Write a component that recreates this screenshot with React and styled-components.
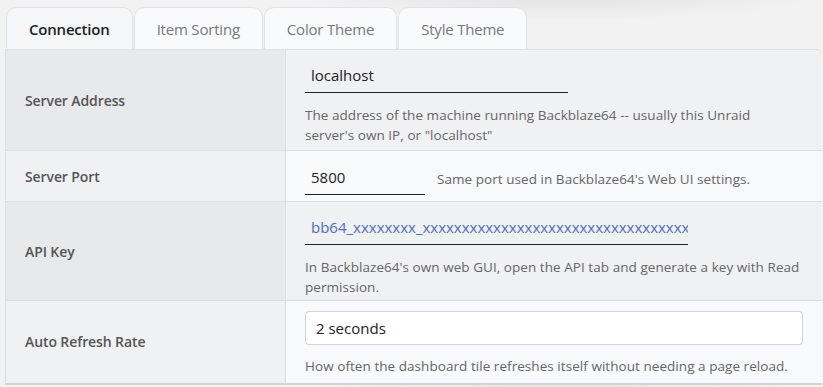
import React from 'react'
import styled, { createGlobalStyle } from 'styled-components'

const GlobalStyle = createGlobalStyle`
    html, body {
        margin: 0;
        padding: 0;
    }
    body {
        background:
            radial-gradient(ellipse 260px 26px at 560px -6px, rgba(0, 0, 0, 0.07), rgba(0, 0, 0, 0) 100%),
            #f2f2f2;
        font-family: "Open Sans", "Noto Sans", sans-serif;
        overflow: hidden;
    }
`

const tabs = ['Connection', 'Item Sorting', 'Color Theme', 'Style Theme']

const rows = [
    {
        label: 'Server Address',
        kind: 'line',
        value: 'localhost',
        width: 263,
        pad: '8px 19px 5px',
        help: 'The address of the machine running Backblaze64 -- usually this Unraid server\'s own IP, or "localhost"',
    },
    {
        label: 'Server Port',
        kind: 'line',
        value: '5800',
        width: 120,
        inline: true,
        pad: '9px 19px 6px',
        help: 'Same port used in Backblaze64\'s Web UI settings.',
    },
    {
        label: 'API Key',
        kind: 'line',
        value: 'bb64_xxxxxxxx_xxxxxxxxxxxxxxxxxxxxxxxxxxxxxxxxxxxxxxxx',
        width: 383,
        accent: true,
        pad: '8px 19px 3px',
        help: 'In Backblaze64\'s own web GUI, open the API tab and generate a key with Read permission.',
    },
    {
        label: 'Auto Refresh Rate',
        kind: 'select',
        value: '2 seconds',
        pad: '10px 19px 6px',
        help: 'How often the dashboard tile refreshes itself without needing a page reload.',
    },
]

const App = () => {
    return (
        <Page>
            <GlobalStyle />
            <TabBar>
                {tabs.map((t, i) => (
                    <Tab key={t} $active={i === 0}>{t}</Tab>
                ))}
            </TabBar>
            <SettingsTable>
                {rows.map((r, i) => (
                    <Row key={r.label}>
                        <LabelCell $alt={i % 2 === 1}>{r.label}</LabelCell>
                        <ValueCell
                            $alt={i % 2 === 1}
                            $inline={r.inline}
                            $select={r.kind === 'select'}
                            $pad={r.pad}
                        >
                            {r.kind === 'select' ? (
                                <SelectBox>{r.value}</SelectBox>
                            ) : (
                                <LineInput $width={r.width} $accent={r.accent}>
                                    <span>{r.value}</span>
                                </LineInput>
                            )}
                            <Help $inline={r.inline}>{r.help}</Help>
                        </ValueCell>
                    </Row>
                ))}
            </SettingsTable>
        </Page>
    )
}

const Page = styled.div`
    padding: 7px 1px 0 5px;
`

const TabBar = styled.div`
    display: flex;
    gap: 1px;
    padding-left: 1px;
`

const Tab = styled.div`
    height: 42px;
    display: flex;
    align-items: center;
    padding: 0 22px;
    box-sizing: border-box;
    border: 1px solid #dfe2e6;
    border-bottom: none;
    border-radius: 10px 10px 0 0;
    background: ${(p) => (p.$active ? '#f5f6f8' : '#f9fafc')};
    color: ${(p) => (p.$active ? '#222' : '#787878')};
    font-size: 15px;
    font-weight: ${(p) => (p.$active ? 600 : 500)};
    letter-spacing: -0.2px;
`

const SettingsTable = styled.div`
    border-left: 1px solid #dcdde0;
    border-top: 1px solid #dcdfe3;
    border-bottom: 2px solid #d3d4d7;
    border-top-right-radius: 6px;
    overflow: hidden;
`

const Row = styled.div`
    display: grid;
    grid-template-columns: 280px 1fr;
    & + & {
        border-top: 1px solid #dcdde0;
    }
`

const LabelCell = styled.div`
    display: flex;
    align-items: center;
    padding-left: 19px;
    background: ${(p) => (p.$alt ? '#f0f1f3' : '#e8e9eb')};
    border-right: 1px solid #dcdde0;
    color: #555;
    font-size: 14px;
    font-weight: 600;
    letter-spacing: -0.1px;
`

const ValueCell = styled.div`
    display: flex;
    flex-direction: ${(p) => (p.$inline ? 'row' : 'column')};
    align-items: ${(p) => (p.$inline ? 'center' : 'flex-start')};
    gap: ${(p) => (p.$inline || p.$select ? '12px' : '13px')};
    padding: ${(p) => p.$pad};
    background: ${(p) => (p.$alt ? '#f8f9fb' : '#f0f1f3')};
`

const LineInput = styled.div`
    width: ${(p) => p.$width}px;
    height: 35px;
    box-sizing: border-box;
    border-bottom: 1px solid #222;
    padding: 0 6px;
    display: flex;
    align-items: center;
    overflow: hidden;
    white-space: nowrap;
    color: ${(p) => (p.$accent ? '#4f6fc4' : '#222')};
    font-size: 15px;
`

const SelectBox = styled.div`
    align-self: stretch;
    height: 34px;
    box-sizing: border-box;
    border: 1px solid #cfd1d4;
    border-radius: 4px;
    background: #fff;
    display: flex;
    align-items: center;
    padding: 0 10px;
    color: #222;
    font-size: 15px;
`

const Help = styled.div`
    color: #666;
    font-size: 13.5px;
    line-height: 19.5px;
    letter-spacing: 0.05px;
    max-width: 500px;
    ${(p) => (p.$inline ? 'padding-top: 4px;' : '')}
`

export default App
